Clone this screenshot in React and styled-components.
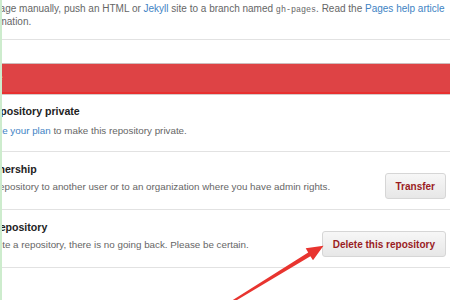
import React from "react";
import styled, { createGlobalStyle } from "styled-components";

const GlobalStyle = createGlobalStyle`
  body {
    margin: 0;
    background: #fff;
    font-family: "Liberation Sans", Arial, sans-serif;
  }
`;

const Viewport = styled.div`
  position: relative;
  width: 450px;
  height: 300px;
  overflow: hidden;
  box-sizing: border-box;
  border-left: 2px solid #cdeccd;
`;

// the page is scrolled a little to the right, so the left edge is cut off
const Sheet = styled.div`
  margin-left: -63px;
`;

const Intro = styled.p`
  margin: 0;
  padding: 3px 0 11px;
  font-size: 10px;
  line-height: 12px;
  color: #666;
  white-space: nowrap;
  border-bottom: 1px solid #e2e2e2;
`;

const Link = styled.a`
  color: #4183c4;
  text-decoration: none;
`;

const Code = styled.code`
  font-family: "Liberation Mono", monospace;
  font-size: 8.4px;
  color: #666;
`;

const DangerHeader = styled.h3`
  margin: 23px 0 0;
  height: 28px;
  line-height: 28px;
  padding-left: 0;
  font-size: 10.4px;
  font-weight: bold;
  color: #fff;
  background: #de4345;
  border-top: 1px solid #cdbcbc;
  border-bottom: 2px solid #e8302f;
  box-shadow: 0 1px 0 #d6c9c9;
`;

const Row = styled.div`
  display: flex;
  align-items: flex-start;
  justify-content: space-between;
  padding: 11px 4px 10px 0;
  border-bottom: 1px solid #e2e2e2;
`;

const Info = styled.div`
  flex: 1;
  padding-bottom: 6px;
  white-space: nowrap;
`;

const Title = styled.h4`
  margin: 0;
  font-size: 10.6px;
  line-height: 13px;
  font-weight: bold;
  color: #222;
`;

const Description = styled.p`
  margin: ${(props) => (props.$loose ? "6px 0 -2px" : "4px 0 0")};
  font-size: 9.8px;
  line-height: 13px;
  color: #666;
`;

const Button = styled.button`
  margin-top: 10px;
  height: 26px;
  box-sizing: border-box;
  padding: 0 10px;
  font-family: inherit;
  font-size: 10px;
  font-weight: bold;
  color: #9a1c1f;
  background: linear-gradient(#f7f7f7, #e7e7e7);
  border: 1px solid #d6d6d6;
  border-radius: 3px;
  white-space: nowrap;
`;

const Arrow = styled.svg`
  position: absolute;
  left: 0;
  top: 0;
  pointer-events: none;
`;

const rows = [
  {
    title: "Make this repository private",
    text: (
      <>
        Please <Link>upgrade your plan</Link> to make this repository private.
      </>
    ),
    loose: true,
  },
  {
    title: "Transfer ownership",
    text: "Transfer this repository to another user or to an organization where you have admin rights.",
    action: "Transfer",
  },
  {
    title: "Delete this repository",
    text: "Once you delete a repository, there is no going back. Please be certain.",
    action: "Delete this repository",
  },
];

export default function App() {
  return (
    <>
      <GlobalStyle />
      <Viewport>
        <Sheet>
          <Intro>
            Or, create a page manually, push an HTML or <Link>Jekyll</Link> site to a
            branch named <Code>gh-pages</Code>. Read the <Link>Pages help article</Link>
            <br />
            for more information.
          </Intro>

          <DangerHeader>Danger Zone</DangerHeader>

          {rows.map((row) => (
            <Row key={row.title}>
              <Info>
                <Title>{row.title}</Title>
                <Description $loose={row.loose}>{row.text}</Description>
              </Info>
              {row.action && <Button>{row.action}</Button>}
            </Row>
          ))}
        </Sheet>

        <Arrow width="450" height="300" viewBox="0 0 450 300">
          <polygon
            points="227.5,302.1 306.2,252.4 303.7,248.3 321.5,245.8 311,260.3 308.4,256.2 228.5,303.9"
            fill="#e8342f"
          />
        </Arrow>
      </Viewport>
    </>
  );
}
